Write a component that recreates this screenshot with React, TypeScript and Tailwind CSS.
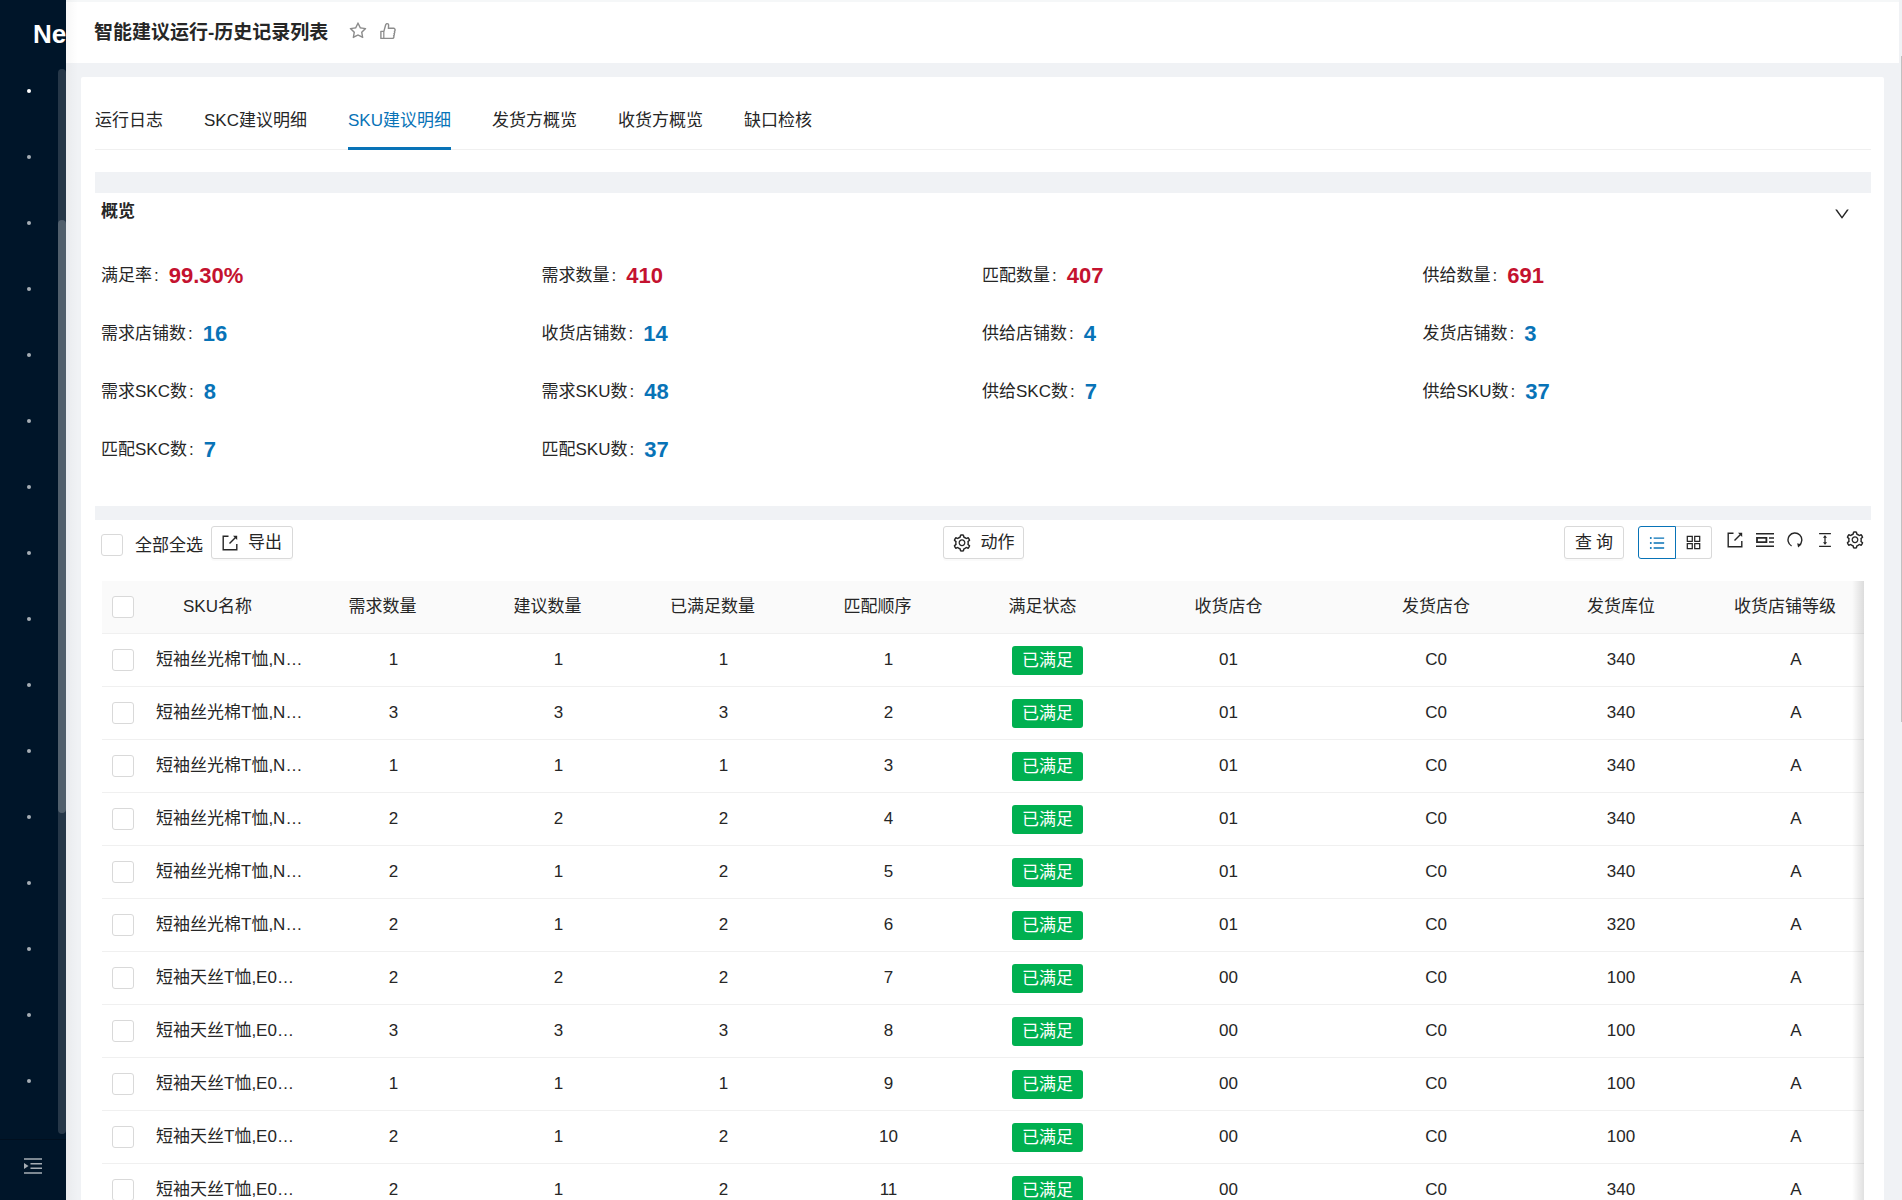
import type { ReactNode } from 'react';
import {
  AiOutlineAppstore,
  AiOutlineColumnHeight,
  AiOutlineDown,
  AiOutlineLike,
  AiOutlineSetting,
  AiOutlineStar,
  AiOutlineUnorderedList,
} from 'react-icons/ai';

const tabs = ['运行日志', 'SKC建议明细', 'SKU建议明细', '发货方概览', '收货方概览', '缺口检核'];

const stats = [
  { label: '满足率', value: '99.30%', hot: true },
  { label: '需求数量', value: '410', hot: true },
  { label: '匹配数量', value: '407', hot: true },
  { label: '供给数量', value: '691', hot: true },
  { label: '需求店铺数', value: '16' },
  { label: '收货店铺数', value: '14' },
  { label: '供给店铺数', value: '4' },
  { label: '发货店铺数', value: '3' },
  { label: '需求SKC数', value: '8' },
  { label: '需求SKU数', value: '48' },
  { label: '供给SKC数', value: '7' },
  { label: '供给SKU数', value: '37' },
  { label: '匹配SKC数', value: '7' },
  { label: '匹配SKU数', value: '37' },
];

const columns = [
  { title: 'SKU名称', sortable: true },
  { title: '需求数量', sortable: true },
  { title: '建议数量', sortable: true },
  { title: '已满足数量', sortable: true },
  { title: '匹配顺序', sortable: true },
  { title: '满足状态', sortable: true },
  { title: '收货店仓', sortable: false },
  { title: '发货店仓', sortable: false },
  { title: '发货库位', sortable: false },
  { title: '收货店铺等级', sortable: true },
];

const rows = [
  { name: '短袖丝光棉T恤,N…', need: 1, suggest: 1, met: 1, to: '01', from: 'C0', slot: '340', level: 'A' },
  { name: '短袖丝光棉T恤,N…', need: 3, suggest: 3, met: 3, to: '01', from: 'C0', slot: '340', level: 'A' },
  { name: '短袖丝光棉T恤,N…', need: 1, suggest: 1, met: 1, to: '01', from: 'C0', slot: '340', level: 'A' },
  { name: '短袖丝光棉T恤,N…', need: 2, suggest: 2, met: 2, to: '01', from: 'C0', slot: '340', level: 'A' },
  { name: '短袖丝光棉T恤,N…', need: 2, suggest: 1, met: 2, to: '01', from: 'C0', slot: '340', level: 'A' },
  { name: '短袖丝光棉T恤,N…', need: 2, suggest: 1, met: 2, to: '01', from: 'C0', slot: '320', level: 'A' },
  { name: '短袖天丝T恤,E0…', need: 2, suggest: 2, met: 2, to: '00', from: 'C0', slot: '100', level: 'A' },
  { name: '短袖天丝T恤,E0…', need: 3, suggest: 3, met: 3, to: '00', from: 'C0', slot: '100', level: 'A' },
  { name: '短袖天丝T恤,E0…', need: 1, suggest: 1, met: 1, to: '00', from: 'C0', slot: '100', level: 'A' },
  { name: '短袖天丝T恤,E0…', need: 2, suggest: 1, met: 2, to: '00', from: 'C0', slot: '100', level: 'A' },
  { name: '短袖天丝T恤,E0…', need: 2, suggest: 1, met: 2, to: '00', from: 'C0', slot: '340', level: 'A' },
];

function ExportIcon() {
  return (
    <svg viewBox="0 0 16 16" className="size-4" fill="none" stroke="currentColor" strokeWidth="1.4">
      <path d="M6.5 1.2H1.2v13.6h13.6V9" />
      <path d="M7.5 8.5 13.5 2.5" />
      <path d="M11 .8h4.2V5z" fill="currentColor" stroke="none" />
    </svg>
  );
}

function LayoutIcon() {
  return (
    <svg viewBox="0 0 18 16" className="h-4 w-[18px]" fill="none" stroke="currentColor" strokeWidth="1.4">
      <path d="M0 1.7h18M0 14.3h18M13 6h5M13 10h5" />
      <path d="M1 5.9h9.4v4.2H1z" strokeWidth="1.8" />
    </svg>
  );
}

function ReloadIcon() {
  return (
    <svg viewBox="0 0 16 16" className="size-4" fill="none" stroke="currentColor" strokeWidth="1.4">
      <path d="M4.6 14A6.9 6.9 0 1 1 12 13.5" />
      <path d="M10.2 11.2l4.3 1.4-3.4 2.8z" fill="currentColor" stroke="none" />
    </svg>
  );
}

function UnfoldIcon() {
  return (
    <svg viewBox="0 0 18 16" className="h-4 w-[18px]" fill="none" stroke="currentColor" strokeWidth="1.4">
      <path d="M0 1h18M6.5 5.7H18M6.5 10.3H18M0 15h18" />
      <path d="M0 5l4.5 3L0 11z" fill="currentColor" stroke="none" />
    </svg>
  );
}

function Checkbox({ id, label }: { id?: string; label?: string }) {
  return (
    <input
      id={id}
      type="checkbox"
      aria-label={label}
      className="block size-[22px] shrink-0 appearance-none rounded-[3px] border border-[#d9d9d9] bg-white"
    />
  );
}

function IconButton({ label, children }: { label: string; children: ReactNode }) {
  return (
    <button type="button" aria-label={label} className="flex w-5 justify-center">
      {children}
    </button>
  );
}

function Sidebar() {
  return (
    <aside className="relative flex w-[66px] shrink-0 flex-col overflow-hidden bg-[#001529] text-white">
      <div className="h-[69px] pt-4 pl-[33px] text-[26px] leading-9 font-bold">Ne</div>
      <nav className="flex flex-1 flex-col gap-[62px] pt-5 pl-[27px]">
        {Array.from({ length: 16 }, (_, i) => (
          <a
            key={i}
            href="#"
            aria-label={`菜单 ${i + 1}`}
            className="block size-1 shrink-0 rounded-full bg-white/65 first:bg-white"
          />
        ))}
      </nav>
      <div className="absolute top-[69px] right-0 h-[1065px] w-2 rounded-full bg-white/15">
        <div className="mt-[151px] h-[593px] rounded-full bg-white/20" />
      </div>
      <button
        type="button"
        aria-label="展开菜单"
        className="flex h-[61px] shrink-0 items-center justify-center border-t border-[#000f1f] pb-2 text-white/65"
      >
        <UnfoldIcon />
      </button>
    </aside>
  );
}

function Overview() {
  return (
    <section className="border-t-[21px] border-[#f0f2f5]">
      <div className="flex h-[38px] items-center justify-between pr-5 pl-[6px]">
        <h2 className="font-bold">概览</h2>
        <button type="button" aria-label="收起" className="pt-1">
          <AiOutlineDown className="size-[18px]" />
        </button>
      </div>
      <dl className="grid grid-cols-4 pt-4 pr-2 pb-[27px] pl-[6px]">
        {stats.map((s) => (
          <div key={s.label} className="flex h-[58px] items-center">
            <dt>
              {s.label}
              <span className="mr-[10px] ml-[2px]">:</span>
            </dt>
            <dd className={s.hot ? 'text-[22px] font-bold text-[#c4122f]' : 'text-[22px] font-bold text-[#0873b7]'}>
              {s.value}
            </dd>
          </div>
        ))}
      </dl>
    </section>
  );
}

function Toolbar() {
  const button = 'flex h-[33px] items-center rounded-[3px] border border-[#d9d9d9] bg-white shadow-[0_2px_0_rgba(0,0,0,0.02)]';

  return (
    <div className="grid grid-cols-[1fr_auto_1fr] px-[6px] pt-[6px]">
      <div className="flex items-start">
        <label htmlFor="select-all" className="mr-2 flex items-start gap-3 pt-2">
          <Checkbox id="select-all" />
          全部全选
        </label>
        <button type="button" className={`${button} gap-[10px] px-[10px]`}>
          <ExportIcon />
          导出
        </button>
      </div>
      <button type="button" className={`${button} gap-[9px] px-2`}>
        <AiOutlineSetting className="size-5" />
        动作
      </button>
      <div className="flex items-start justify-end">
        <button type="button" className={`${button} mr-[14px] gap-1 px-[10px]`}>
          <span>查</span>
          <span>询</span>
        </button>
        <button
          type="button"
          aria-label="列表"
          className="flex h-[33px] w-[38px] items-center justify-center rounded-l-[3px] border border-[#0873b7] text-[#0873b7]"
        >
          <AiOutlineUnorderedList className="size-[18px]" />
        </button>
        <button
          type="button"
          aria-label="卡片"
          className="flex h-[33px] w-9 items-center justify-center rounded-r-[3px] border border-l-0 border-[#d9d9d9]"
        >
          <AiOutlineAppstore className="size-[19px]" />
        </button>
        <div className="ml-[13px] flex h-7 items-center gap-[10px]">
          <IconButton label="导出">
            <ExportIcon />
          </IconButton>
          <IconButton label="布局">
            <LayoutIcon />
          </IconButton>
          <IconButton label="刷新">
            <ReloadIcon />
          </IconButton>
          <IconButton label="密度">
            <AiOutlineColumnHeight className="size-[18px]" />
          </IconButton>
          <IconButton label="设置">
            <AiOutlineSetting className="size-5" />
          </IconButton>
        </div>
      </div>
    </div>
  );
}

function SkuTable() {
  return (
    <div className="relative mx-[7px] mt-[22px] overflow-hidden">
      <table className="w-[1799px] table-fixed border-separate border-spacing-0 text-center">
        <colgroup>
          <col className="w-11" />
          <col className="w-[165px]" />
          <col className="w-[165px]" />
          <col className="w-[165px]" />
          <col className="w-[165px]" />
          <col className="w-[165px]" />
          <col className="w-[165px]" />
          <col className="w-[185px]" />
          <col className="w-[230px]" />
          <col className="w-[140px]" />
          <col className="w-[210px]" />
        </colgroup>
        <thead>
          <tr className="h-[53px] bg-[#fafafa]">
            <th className="border-b border-[#f0f0f0] pl-[10px]">
              <Checkbox label="全选本页" />
            </th>
            {columns.map((c) => (
              <th
                key={c.title}
                className={
                  c.sortable
                    ? 'border-b border-[#f0f0f0] pr-[22px] font-normal'
                    : 'border-b border-[#f0f0f0] font-normal'
                }
              >
                {c.title}
              </th>
            ))}
          </tr>
        </thead>
        <tbody>
          {rows.map((r, i) => (
            <tr key={i} className="h-[53px] *:border-b *:border-[#f0f0f0]">
              <td className="pl-[10px]">
                <Checkbox label={`选择第${i + 1}行`} />
              </td>
              <td className="pl-[10px] text-left whitespace-nowrap">{r.name}</td>
              <td>{r.need}</td>
              <td>{r.suggest}</td>
              <td>{r.met}</td>
              <td>{i + 1}</td>
              <td>
                <span className="mr-3 inline-block rounded-[3px] bg-[#00b050] px-[10px] align-middle leading-[29px] text-white">
                  已满足
                </span>
              </td>
              <td>{r.to}</td>
              <td>{r.from}</td>
              <td>{r.slot}</td>
              <td>{r.level}</td>
            </tr>
          ))}
        </tbody>
      </table>
      <div className="absolute inset-y-0 right-0 w-3 bg-linear-to-l from-black/12 to-transparent" />
    </div>
  );
}

export default function App() {
  return (
    <div className="flex h-screen overflow-hidden bg-[#f0f2f5] font-['Liberation_Sans','Noto_Sans_CJK_SC',sans-serif] text-[17px] leading-6 text-[#262626]">
      <Sidebar />
      <div className="relative min-w-0 flex-1">
        <header className="mr-[3px] flex h-[63px] items-center border-t-2 border-[#f5f7f8] bg-white px-7">
          <h1 className="mr-5 text-[19px] font-bold">智能建议运行-历史记录列表</h1>
          <div className="flex gap-[10px] pb-1 text-[#8c8c8c]">
            <button type="button" aria-label="收藏">
              <AiOutlineStar className="size-5" />
            </button>
            <button type="button" aria-label="点赞">
              <AiOutlineLike className="size-5" />
            </button>
          </div>
        </header>

        <main className="mt-[14px] mr-[18px] ml-[15px] rounded-t-[2px] bg-white pt-5 pr-[13px] pl-[14px]">
          <nav className="mb-[22px] flex gap-[41px] border-b border-[#f0f0f0]">
            {tabs.map((t) => (
              <a
                key={t}
                href="#"
                className={
                  t === 'SKU建议明细'
                    ? '-mb-px border-b-[3px] border-[#0873b7] pt-3 pb-[14px] text-[#0873b7]'
                    : 'pt-3 pb-[14px]'
                }
              >
                {t}
              </a>
            ))}
          </nav>

          <Overview />

          <section className="border-t-[14px] border-[#f0f2f5]">
            <Toolbar />
            <SkuTable />
          </section>
        </main>

        {/* sidebar shadow */}
        <div className="pointer-events-none absolute inset-y-0 left-0 w-3 bg-linear-to-r from-black/3 to-transparent" />
        {/* page scrollbar */}
        <div className="absolute top-14 right-0 h-[666px] w-px bg-[#c1c1c1]" />
      </div>
    </div>
  );
}
